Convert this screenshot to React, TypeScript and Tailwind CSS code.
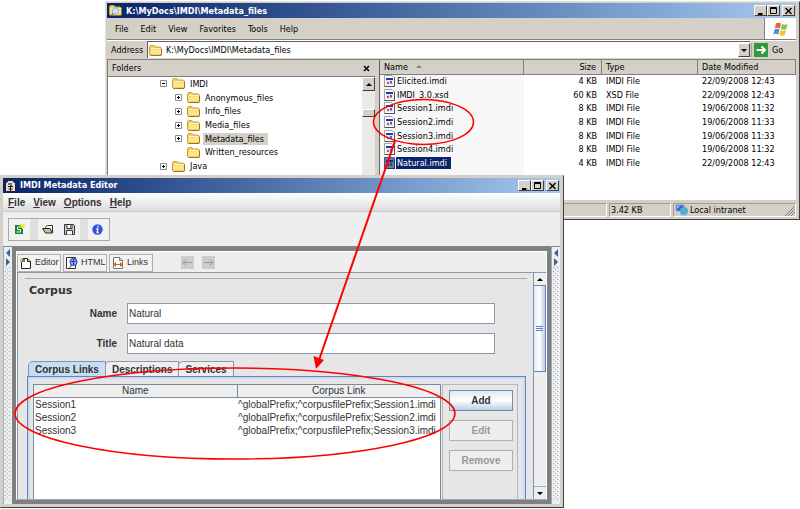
import type { ReactNode } from "react"

const files = [
  { name: "Elicited.imdi", size: "4 KB", type: "IMDI File", date: "22/09/2008 12:43" },
  { name: "IMDI_3.0.xsd", size: "60 KB", type: "XSD File", date: "22/09/2008 12:43" },
  { name: "Session1.imdi", size: "8 KB", type: "IMDI File", date: "19/06/2008 11:32" },
  { name: "Session2.imdi", size: "8 KB", type: "IMDI File", date: "19/06/2008 11:33" },
  { name: "Session3.imdi", size: "8 KB", type: "IMDI File", date: "19/06/2008 11:33" },
  { name: "Session4.imdi", size: "8 KB", type: "IMDI File", date: "19/06/2008 11:32" },
  { name: "Natural.imdi", size: "4 KB", type: "IMDI File", date: "22/09/2008 12:43", selected: true },
]

const folders = [
  { name: "IMDI", sign: "-", root: true },
  { name: "Anonymous_files", sign: "+" },
  { name: "Info_files", sign: "+" },
  { name: "Media_files", sign: "+" },
  { name: "Metadata_files", sign: "+", selected: true },
  { name: "Written_resources", sign: "" },
  { name: "Java", sign: "+", root: true },
]

const links = ["Session1", "Session2", "Session3"]

function FolderIcon({ search = false }: { search?: boolean }) {
  return (
    <svg viewBox="0 0 13 11" className="h-[11px] w-[13px] shrink-0" aria-hidden="true">
      <path d="M.5 9.500v-7.500l1-1.500h3.500l1.200 1.500h4.800l1.500 1v6.500l-1 1h-10z" fill="#f3cf5c" stroke="#c9a040" />
      <path d="M1.500 4.500h10.500v4.500h-10.500z" fill="#fbe58d" />
      <path d="M2 3.500h9.500" stroke="#fff6c4" />
      <path d="M1.500 10.500h10.500l.5-1.500v-5" fill="none" stroke="#9c7420" />
      {search && (
        <>
          <circle cx="6.500" cy="6" r="3.200" fill="#c5e6f7" stroke="#8db8dc" />
          <path d="M4 8.500l-2 2.500" stroke="#56759a" strokeWidth="1.500" />
        </>
      )}
    </svg>
  )
}

function FileIcon({ selected = false }: { selected?: boolean }) {
  return (
    <svg viewBox="0 0 11 12" className="h-3 w-[11px] shrink-0" aria-hidden="true">
      <path d="M.5.5h7.500l2.500 2.500v8.500h-10z" fill="#fff" stroke="#a0a0a8" />
      <path d="M10.500 2.500v9h-10" fill="none" stroke="#505058" />
      <path d="M2 3h7v7h-7z" fill="#dfe6f8" />
      <path d="M2 3h7v2h-7z" fill="#2637a8" />
      <path d="M3 7h2v2h-2z" fill="#d8503c" />
      <path d="M6 6h2v2h-2z" fill="#3c66d8" />
      <path d="M6 8h2v1h-2z" fill="#e0a03c" />
      {selected && <path d="M0 0h11v12h-11z" fill="#0a246a" opacity=".6" />}
    </svg>
  )
}

function WindowButtons() {
  const button =
    "flex h-[11px] w-[13px] items-center justify-center border border-t-white border-l-white border-r-[#404040] border-b-[#404040] bg-[#d4d0c8]"
  return (
    <div className="flex shrink-0 pr-px">
      <button type="button" aria-label="Minimize" className={button}>
        <svg viewBox="0 0 9 8" className="h-2 w-[9px]">
          <path d="M2 7h4.500" stroke="#000" strokeWidth="2" />
        </svg>
      </button>
      <button type="button" aria-label="Maximize" className={button}>
        <svg viewBox="0 0 9 8" className="h-2 w-[9px]">
          <path d="M1.500.5h6v6h-6zM1.500 1.500h6" fill="none" stroke="#000" />
        </svg>
      </button>
      <button type="button" aria-label="Close" className={`${button} ml-0.5`}>
        <svg viewBox="0 0 9 8" className="h-2 w-[9px]">
          <path d="M1.500 1l6 6M7.500 1l-6 6" stroke="#000" strokeWidth="1.400" />
        </svg>
      </button>
    </div>
  )
}

function TreeSign({ sign }: { sign: string }) {
  if (!sign) return <span className="w-[7px]" />
  return (
    <svg viewBox="0 0 7 7" className="size-[7px] shrink-0" aria-hidden="true">
      <path d="M.5.5h6v6h-6z" fill="#fff" stroke="#8a8a8a" />
      <path d={sign === "+" ? "M2 3.500h3M3.500 2v3" : "M2 3.500h3"} stroke="#000" />
    </svg>
  )
}

function Explorer() {
  return (
    <section className="absolute top-px right-0 left-[105px] flex flex-col border border-t-[#e4e1db] border-l-[#e4e1db] border-r-[#404040] border-b-[#404040] bg-[#d4d0c8] p-px pr-[3px] font-['DejaVu_Sans_Condensed','DejaVu_Sans',sans-serif] text-[9px] leading-3 text-black">
      <header className="flex h-[15px] items-center gap-1 bg-linear-to-r from-[#0a246a] to-[#a6caf0] pl-0.5">
        <FolderIcon search />
        <h1 className="flex-1 font-bold text-white">K:\MyDocs\IMDI\Metadata_files</h1>
        <WindowButtons />
      </header>

      <nav className="flex h-[22px] items-center border-b border-[#808080] pl-2">
        <div className="flex flex-1 items-center gap-3">
          {["File", "Edit", "View", "Favorites", "Tools", "Help"].map((item) => (
            <button key={item} type="button">
              {item}
            </button>
          ))}
        </div>
        <div className="flex h-full w-8 items-center justify-center border-l border-[#808080] bg-white">
          <svg viewBox="0 0 16 14" className="h-3.5 w-4" aria-hidden="true">
            <path d="M3 1.500q2-1.500 5 0l-1.200 5q-2.500-1.500-5 0z" fill="#e8603c" />
            <path d="M9 2q2.500 1.500 5.500 0l-1.200 5q-3 1.500-5.500 0z" fill="#8cc152" />
            <path d="M1.500 7.500q2.500-1.500 5 0l-1.200 5q-2.500-1.500-5 0z" fill="#4a8ee0" />
            <path d="M7.500 8q2.500 1.500 5.500 0l-1.200 5q-3 1.500-5.500 0z" fill="#f6c32c" />
          </svg>
        </div>
      </nav>

      <div className="flex h-[18px] items-center border-t border-white pl-1">
        <label htmlFor="address" className="w-[36px]">
          Address
        </label>
        <div className="flex h-[17px] flex-1 items-center gap-1 border-t border-l border-[#606060] bg-white pl-px">
          <FolderIcon />
          <input
            id="address"
            defaultValue="K:\MyDocs\IMDI\Metadata_files"
            className="min-w-0 flex-1 outline-none"
          />
          <button
            type="button"
            aria-label="Show addresses"
            className="flex h-3.5 w-3 items-center justify-center border border-t-white border-l-white border-r-[#404040] border-b-[#404040] bg-[#d4d0c8]"
          >
            <svg viewBox="0 0 6 3" className="h-[3px] w-1.5">
              <path d="M0 0h6l-3 3z" />
            </svg>
          </button>
        </div>
        <button type="button" className="ml-px flex w-[45px] items-center gap-1 border-l border-[#a8a49c] pl-0.5">
          <svg viewBox="0 0 14 14" className="size-3.5" aria-hidden="true">
            <path d="M0 0h14v14h-14z" fill="#2f9a3a" />
            <path d="M2.500 7h8M7.500 3.500l3.500 3.500l-3.500 3.500" fill="none" stroke="#fff" strokeWidth="2" />
          </svg>
          Go
        </button>
      </div>

      <div className="mt-px flex h-[141px] border-t border-[#808080]">
        <aside className="flex w-[268px] shrink-0 flex-col border-l border-[#808080]">
          <div className="flex h-[17px] items-center justify-between border-b border-[#808080] pr-[5px] pl-1">
            <h2>Folders</h2>
            <button type="button" aria-label="Close folders">
              <svg viewBox="0 0 7 7" className="size-[7px]">
                <path d="M1 1l5 5M6 1l-5 5" stroke="#000" strokeWidth="1.500" />
              </svg>
            </button>
          </div>
          <div className="flex min-h-0 flex-1 bg-white">
            <ul className="flex h-24 flex-1 flex-col">
              {folders.map((folder) => (
                <li
                  key={folder.name}
                  className={`flex flex-1 items-center gap-[5px] ${folder.root ? "pl-[52px]" : "pl-[67px]"}`}
                >
                  <TreeSign sign={folder.sign} />
                  <FolderIcon />
                  <span className={`-ml-0.5 px-0.5 ${folder.selected ? "bg-[#d4d0c8] pr-1" : ""}`}>
                    {folder.name}
                  </span>
                </li>
              ))}
            </ul>
            <div className="flex w-[13px] flex-col bg-[#eceae6]">
              <button
                type="button"
                aria-label="Scroll up"
                className="flex h-3.5 items-center justify-center border border-t-white border-l-white border-r-[#404040] border-b-[#404040] bg-[#d4d0c8]"
              >
                <svg viewBox="0 0 6 3" className="h-[3px] w-1.5">
                  <path d="M0 3h6l-3-3z" />
                </svg>
              </button>
              <div className="mt-[18px] h-2 border border-t-white border-l-white border-r-[#404040] border-b-[#404040] bg-[#d4d0c8]" />
            </div>
          </div>
        </aside>

        <div className="ml-1 flex min-w-0 flex-1 flex-col border-l border-[#606060] bg-white">
          <table className="w-full table-fixed border-collapse">
            <thead>
              <tr className="h-3.5 bg-[#d4d0c8] text-left">
                <th className="border-b border-[#808080] p-0 pl-1 font-normal">
                  <span className="flex items-center gap-2">
                    Name
                    <svg viewBox="0 0 6 3" className="h-[3px] w-1.5" aria-hidden="true">
                      <path d="M0 3h6l-3-3z" fill="#88847c" />
                    </svg>
                  </span>
                </th>
                <th className="w-[78px] border-b border-l border-[#808080] p-0 pr-[5px] text-right font-normal">
                  Size
                </th>
                <th className="w-24 border-b border-l border-[#808080] p-0 pl-1 font-normal">Type</th>
                <th className="w-[98px] border-x border-b border-[#808080] p-0 pl-1 font-normal">Date Modified</th>
              </tr>
            </thead>
          </table>
          <table className="h-[95px] w-full table-fixed border-collapse">
            <tbody>
              {files.map((file) => (
                <tr key={file.name}>
                  <td className="bg-[#f7f7f7] p-0 pl-1">
                    <span className="flex items-center gap-px">
                      <FileIcon selected={file.selected} />
                      <span className={file.selected ? "bg-[#0a246a] pr-1 pl-px text-white" : "px-px"}>
                        {file.name}
                      </span>
                    </span>
                  </td>
                  <td className="w-[78px] p-0 pr-[5px] text-right">{file.size}</td>
                  <td className="w-24 p-0 pl-1">{file.type}</td>
                  <td className="w-[98px] p-0 pl-1">{file.date}</td>
                </tr>
              ))}
            </tbody>
          </table>
          <div className="mr-[272px] flex-1 bg-[#f7f7f7]" />
        </div>
      </div>

      <footer className="flex h-[18px] items-center justify-end pt-0.5">
        <div className="h-3.5 flex-1 border border-[#a09c94] border-r-white border-b-white" />
        <div className="ml-0.5 flex h-3.5 w-[62px] items-center border border-[#a09c94] border-r-white border-b-white pl-px">
          3.42 KB
        </div>
        <div className="ml-0.5 flex h-3.5 w-[123px] items-center gap-px border border-[#a09c94] border-r-white border-b-white pl-px">
          <svg viewBox="0 0 14 13" className="h-[13px] w-3.5" aria-hidden="true">
            <path d="M1 1h8v6h-8z" fill="#2f62d0" stroke="#8fa8c8" />
            <path d="M2 2h3l-3 3z" fill="#9cc4f4" />
            <path d="M5 8h4l3 4h-7z" fill="#b8c4d4" />
            <circle cx="9" cy="7" r="4" fill="#4fa8e8" />
            <path d="M7 5q3-2 4 1q-2 3-4-1z" fill="#62c15a" />
          </svg>
          <span className="flex-1">Local intranet</span>
          <svg viewBox="0 0 11 11" className="size-[11px]" aria-hidden="true">
            <path d="M1 11l10-10M4 11l7-7M7 11l4-4" stroke="#808080" />
          </svg>
        </div>
      </footer>
    </section>
  )
}

function MiniDivider({ id }: { id: string }) {
  return (
    <div className="w-[9px] shrink-0 border-l border-[#9aabbd] bg-[#eeeeee] px-px">
      <svg viewBox="0 0 6 20" className="h-5 w-1.5" aria-hidden="true">
        <path d="M5 2v8l-4-4z" fill="#3f5f9e" />
        <path d="M1 11v8l4-4z" fill="#3f5f9e" />
      </svg>
      <svg className="h-[234px] w-1.5" aria-hidden="true">
        <defs>
          <pattern id={id} width="4" height="4" patternUnits="userSpaceOnUse">
            <path d="M0 0h1v1h-1zM2 2h1v1h-1z" fill="#9fa8b2" />
          </pattern>
        </defs>
        <rect width="6" height="234" fill={`url(#${id})`} />
      </svg>
    </div>
  )
}

function Toolbar() {
  return (
    <div className="flex h-[34px] items-center pl-[5px]">
      <div className="flex h-[23px] w-[102px] items-center border border-[#aaaaaa] bg-[#f2f2f2]">
        <button type="button" aria-label="New session" className="flex w-[21px] justify-center">
          <svg viewBox="0 0 11 12" className="h-3 w-[11px]">
            <path d="M1 2h8v9h-8z" fill="#138a2c" />
            <path d="M7 4h-3.500v2.500h3v2.500h-4" fill="none" stroke="#fff" />
            <path d="M6.500 1h4v4h-3z" fill="#e6e622" />
            <path d="M8.500 0v6M5.500 3h5.500" stroke="#f3f35a" />
          </svg>
        </button>
        <span className="h-full w-2 bg-[#e0e0e0]" />
        <button type="button" aria-label="Open" className="flex w-4 justify-end">
          <svg viewBox="0 0 12 10" className="h-2.5 w-3">
            <path d="M3 3.500l2.500-2h5v7.500" fill="#fff" stroke="#333" />
            <path d="M.5 4.500h7.500l2.500 4.500h-7z" fill="#e0bb90" stroke="#222" />
          </svg>
        </button>
        <button type="button" aria-label="Save" className="flex w-[21px] justify-end">
          <svg viewBox="0 0 11 11" className="size-[11px]">
            <path d="M.5.5h9l1 1v9h-10z" fill="#cfcfcf" stroke="#333" />
            <path d="M3 .5h5v4h-5zM2.500 10.500v-4h6v4" fill="#fff" stroke="#333" />
            <path d="M6.500 1.500v2" stroke="#333" />
          </svg>
        </button>
        <span className="ml-[5px] h-full w-2 bg-[#e0e0e0]" />
        <button type="button" aria-label="About" className="flex w-[19px] justify-center">
          <svg viewBox="0 0 11 11" className="size-[11px]">
            <circle cx="5.500" cy="5.500" r="5.200" fill="#3552d8" />
            <path d="M6 1.800v1.600M4.200 4.800h1.600l-.6 3.700h1.500" fill="none" stroke="#fff" strokeWidth="1.300" />
          </svg>
        </button>
      </div>
    </div>
  )
}

function ViewButton({ children, label }: { children: ReactNode; label: string }) {
  return (
    <button
      type="button"
      className="flex h-[18px] w-11 items-center gap-[3px] border border-[#b0b0b0] bg-[#f2f2f2] pl-0.5 text-[9px]"
    >
      <svg viewBox="0 0 12 12" className="size-3 shrink-0" aria-hidden="true">
        {children}
      </svg>
      {label}
    </button>
  )
}

function ViewBar() {
  return (
    <div className="flex h-5 items-center gap-0.5 bg-[#eeeeee] pt-px">
      <ViewButton label="Editor">
        <path d="M1.500 1.500h6l3 3v7h-9z" fill="#fff" stroke="#222" />
        <path d="M7.500 1.500v3h3" fill="#e8df52" stroke="#222" />
        <path d="M0 1h3v4h-3z" fill="#d8cf40" />
        <path d="M2 2h3v3h-3z" fill="#3a88b0" />
      </ViewButton>
      <ViewButton label="HTML">
        <path d="M.5.5h9v11h-9z" fill="#fff" stroke="#333" />
        <circle cx="7.500" cy="5" r="3.600" fill="#8ea6ee" stroke="#2b3fb0" />
        <path d="M5 4q2.500 2 5 0M7.500 2v6" fill="none" stroke="#2b3fb0" />
        <path d="M5.500 8l-2 2.500" stroke="#222" />
      </ViewButton>
      <ViewButton label="Links">
        <path d="M1.500.5h6l3 3v8h-9z" fill="#fff" stroke="#777" />
        <path d="M7.500.5v3h3" fill="none" stroke="#777" />
        <path d="M1.500 7.500h9" stroke="#c4661e" />
        <path d="M1 7.500l3-2.500v5zM11 7.500l-3-2.500v5z" fill="#c4661e" />
      </ViewButton>
      <div className="ml-[26px] flex gap-2">
        {["Back", "Forward"].map((label) => (
          <button key={label} type="button" disabled aria-label={label} className="bg-[#cccccc]">
            <svg viewBox="0 0 13 13" className="size-[13px]">
              <path
                d={label === "Back" ? "M2 6.500h9M5 3.500l-3 3l3 3" : "M2 6.500h9M8 3.500l3 3l-3 3"}
                fill="none"
                stroke="#999"
              />
            </svg>
          </button>
        ))}
      </div>
    </div>
  )
}

function Field({ id, label, value }: { id: string; label: string; value: string }) {
  return (
    <div className="flex items-center gap-2.5">
      <label htmlFor={id} className="w-[92px] text-right font-bold">
        {label}
      </label>
      <input
        id={id}
        defaultValue={value}
        className="h-[21px] min-w-0 flex-1 border border-[#8a9aab] bg-white pl-px outline-none"
      />
    </div>
  )
}

function CorpusForm() {
  return (
    <div className="flex min-w-0 flex-1 flex-col pl-[7px]">
      <hr className="mt-[5px] mr-1.5 border-[#aaaaaa]" />
      <h2 className="mt-[5px] ml-1 font-['DejaVu_Sans',sans-serif] text-[11px] leading-3.5 font-bold">Corpus</h2>
      <div className="mt-[5px] mr-[38px] flex flex-col gap-[9px]">
        <Field id="name" label="Name" value="Natural" />
        <Field id="title" label="Title" value="Natural data" />
      </div>

      <div role="tablist" className="mt-[7px] ml-[3px] flex h-[15px] font-bold">
        {["Corpus Links", "Descriptions", "Services"].map((tab, i) => (
          <button
            key={tab}
            type="button"
            role="tab"
            aria-selected={i === 0}
            className={`rounded-tl-[5px] border border-b-0 px-1.5 leading-[13px] ${
              i === 0 ? "border-[#7a94bd] bg-[#c8ddf2]" : "-ml-px border-[#8a9aab] bg-[#eeeeee]"
            }`}
          >
            {tab}
          </button>
        ))}
      </div>

      <div className="mr-[7px] ml-0.5 flex min-h-0 flex-1 border border-b-0 border-[#6382bf] bg-[#e6e6e6]">
        <div className="flex min-w-0 flex-1 border-2 border-b-0 border-[#c8ddf2] pt-[5px] pr-[5px] pl-[3px]">
          <div className="min-w-0 flex-1 border border-b-0 border-[#7a8a99] bg-white">
            <table className="w-full table-fixed border-collapse">
              <thead>
                <tr className="h-3 bg-[#eeeeee] leading-3">
                  <th className="border-r border-b border-[#7a8a99] p-0 font-normal">Name</th>
                  <th className="border-b border-[#7a8a99] p-0 font-normal">Corpus Link</th>
                </tr>
              </thead>
              <tbody>
                {links.map((link) => (
                  <tr key={link} className="h-[13px]">
                    <td className="p-0 pl-px">{link}</td>
                    <td className="p-0 pl-px whitespace-nowrap">{`^globalPrefix;^corpusfilePrefix;${link}.imdi`}</td>
                  </tr>
                ))}
              </tbody>
            </table>
          </div>
          <div className="ml-px flex w-[76px] shrink-0 flex-col items-stretch gap-[9px] border border-b-0 border-[#b8b8b8] pt-[5px] pr-1 pl-1.5 font-bold">
            <button
              type="button"
              className="h-[21px] border border-[#7a8a99] bg-linear-to-b from-[#dce8f3] via-white to-[#b8cfe5]"
            >
              Add
            </button>
            <button type="button" disabled className="h-[21px] border border-[#b0b0b0] bg-[#eeeeee] text-[#999999]">
              Edit
            </button>
            <button type="button" disabled className="h-[21px] border border-[#b0b0b0] bg-[#eeeeee] text-[#999999]">
              Remove
            </button>
          </div>
        </div>
      </div>
    </div>
  )
}

function Scrollbar() {
  return (
    <div className="flex w-[13px] shrink-0 flex-col border-l border-[#7a94bd] bg-[#eeeeee]">
      <button type="button" aria-label="Scroll up" className="flex h-3 items-center justify-center">
        <svg viewBox="0 0 6 3" className="h-[3px] w-1.5">
          <path d="M0 3h6l-3-3z" />
        </svg>
      </button>
      <div className="flex h-[87px] items-center justify-center border border-l-0 border-[#6382bf] bg-linear-to-r from-[#dfeaf5] via-white to-[#b8cfe5]">
        <svg viewBox="0 0 7 5" className="h-[5px] w-[7px]" aria-hidden="true">
          <path d="M0 .5h7M0 2.500h7M0 4.500h7" stroke="#6382bf" />
        </svg>
      </div>
      <span className="flex-1" />
      <button
        type="button"
        aria-label="Scroll down"
        className="flex h-[13px] items-center justify-center border-t border-[#9aabbd]"
      >
        <svg viewBox="0 0 6 3" className="h-[3px] w-1.5">
          <path d="M0 0h6l-3 3z" />
        </svg>
      </button>
    </div>
  )
}

function MetadataEditor() {
  return (
    <section className="absolute top-[175px] right-[236px] left-0 flex flex-col border border-t-[#d4d0c8] border-l-[#d4d0c8] border-r-[#404040] border-b-[#404040] bg-[#d4d0c8] p-0.5 pr-[3px] pb-[3px] font-['Liberation_Sans',Arial,sans-serif] text-[10px] leading-[13px] text-[#333333]">
      <header className="flex h-[15px] items-center gap-1 bg-linear-to-r from-[#0a246a] to-[#a6caf0] pl-0.5">
        <svg viewBox="0 0 11 12" className="h-3 w-[11px]" aria-hidden="true">
          <path d="M.5 11.500v-8l3-3h4l3 3v8z" fill="#ddd" stroke="#222" />
          <path d="M3 4h2M6 3v3M3 6.500h5M3.500 9h4M5.500 6v5" stroke="#111" />
        </svg>
        <h1 className="flex-1 font-['DejaVu_Sans_Condensed',sans-serif] text-[9px] font-bold text-white">
          IMDI Metadata Editor
        </h1>
        <WindowButtons />
      </header>

      <div className="flex flex-col bg-[#eeeeee]">
        <nav className="flex h-[19px] items-center gap-2 border-b border-[#cccccc] bg-linear-to-b from-white to-[#dddddd] pl-[5px] font-bold">
          {["File", "View", "Options", "Help"].map((item) => (
            <button key={item} type="button">
              <u>{item[0]}</u>
              {item.slice(1)}
            </button>
          ))}
        </nav>
        <Toolbar />

        <div className="flex h-[258px] border-t border-[#7a8a99]">
          <MiniDivider id="bumps-left" />
          <div className="flex min-w-0 flex-1 flex-col border-4 border-[#808080]">
            <div className="flex min-h-0 flex-1 flex-col border border-white border-b-[#9aabbd]">
              <ViewBar />
              <div className="flex min-h-0 flex-1 border-t border-l border-[#8a9aab] bg-[#e6e6e6]">
                <CorpusForm />
                <Scrollbar />
              </div>
            </div>
          </div>
          <MiniDivider id="bumps-right" />
        </div>
      </div>
    </section>
  )
}

function Annotations() {
  return (
    <svg className="pointer-events-none absolute top-0 left-0 h-[509px] w-[800px]" aria-hidden="true">
      <g fill="none" stroke="#ff0000" strokeWidth="1.500">
        <ellipse cx="423.500" cy="122" rx="50" ry="22.500" />
        <ellipse cx="235" cy="413.500" rx="220" ry="45.500" />
      </g>
      <path d="M395 141L319 360" stroke="#ff0000" strokeWidth="2" />
      <path d="M316 369l-2.500-13l10.500 4z" fill="#ff0000" />
    </svg>
  )
}

export default function App() {
  return (
    <main className="relative min-h-screen overflow-hidden bg-white">
      <Explorer />
      <MetadataEditor />
      <Annotations />
    </main>
  )
}
